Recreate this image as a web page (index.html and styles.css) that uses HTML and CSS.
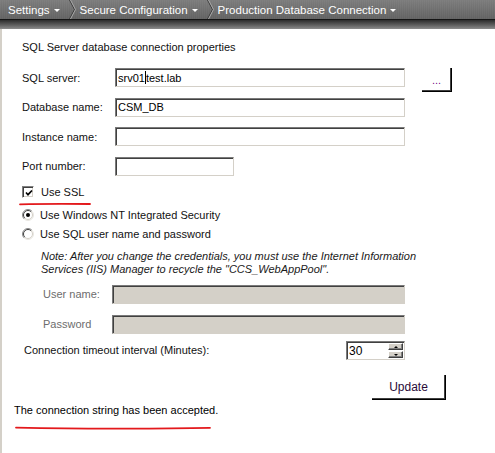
FILE: index.html
```
<!DOCTYPE html>
<html lang="en">
<head>
<meta charset="utf-8">
<title>Production Database Connection</title>
<link rel="stylesheet" href="styles.css">
</head>
<body>
<header class="topbar">
  <nav class="crumbs">
    <span class="crumb">Settings<i class="caret-down"></i></span>
    <svg class="sep" viewBox="0 0 7 19" aria-hidden="true"><polyline points="0.5,0 5.5,9.5 0.5,19" fill="none" stroke="#3a3a3a" stroke-width="1"/><polyline points="1.5,0 6.5,9.5 1.5,19" fill="none" stroke="#a8a8a8" stroke-width="1"/></svg>
    <span class="crumb">Secure Configuration<i class="caret-down"></i></span>
    <svg class="sep" viewBox="0 0 7 19" aria-hidden="true"><polyline points="0.5,0 5.5,9.5 0.5,19" fill="none" stroke="#3a3a3a" stroke-width="1"/><polyline points="1.5,0 6.5,9.5 1.5,19" fill="none" stroke="#a8a8a8" stroke-width="1"/></svg>
    <span class="crumb">Production Database Connection<i class="caret-down"></i></span>
  </nav>
  <div class="band"></div>
</header>

<main class="page">
  <div class="title">SQL Server database connection properties</div>

  <div class="fields">
    <label class="lbl">SQL server:</label>
    <div class="field wide"><span>srv01</span><span class="cursor"></span><span>test.lab</span></div>
    <button class="btn browse" type="button">...</button>

    <label class="lbl">Database name:</label>
    <div class="field wide">CSM_DB</div>

    <label class="lbl">Instance name:</label>
    <div class="field wide"></div>

    <label class="lbl">Port number:</label>
    <div class="field port"></div>
  </div>

  <div class="check-row">
    <span class="checkbox">
      <svg viewBox="0 0 8 8" aria-hidden="true"><polyline points="1,3.5 3,5.7 7,1.5" fill="none" stroke="#000" stroke-width="1.7"/></svg>
    </span>
    <span>Use SSL</span>
  </div>
  <svg class="ink ink-ssl" viewBox="0 0 72 4" aria-hidden="true"><path d="M1 2.3 Q30 1.6 71 2" fill="none" stroke="#e3191c" stroke-width="1.8" stroke-linecap="round"/></svg>

  <div class="radio-row first">
    <svg class="radio" viewBox="0 0 12 12" aria-hidden="true">
      <circle cx="6" cy="6" r="5.5" fill="#fff"/>
      <path d="M9.9 2.1 A5.5 5.5 0 0 0 2.1 9.9" fill="none" stroke="#8a8a8a"/>
      <path d="M9.2 2.8 A4.5 4.5 0 0 0 2.8 9.2" fill="none" stroke="#404040"/>
      <path d="M2.1 9.9 A5.5 5.5 0 0 0 9.9 2.1" fill="none" stroke="#e8e6e1"/>
      <path d="M2.8 9.2 A4.5 4.5 0 0 0 9.2 2.8" fill="none" stroke="#d4d0c8"/>
      <circle cx="6" cy="6" r="2" fill="#000"/>
    </svg>
    <span>Use Windows NT Integrated Security</span>
  </div>
  <div class="radio-row second">
    <svg class="radio" viewBox="0 0 12 12" aria-hidden="true">
      <circle cx="6" cy="6" r="5.5" fill="#fff"/>
      <path d="M9.9 2.1 A5.5 5.5 0 0 0 2.1 9.9" fill="none" stroke="#8a8a8a"/>
      <path d="M9.2 2.8 A4.5 4.5 0 0 0 2.8 9.2" fill="none" stroke="#404040"/>
      <path d="M2.1 9.9 A5.5 5.5 0 0 0 9.9 2.1" fill="none" stroke="#e8e6e1"/>
      <path d="M2.8 9.2 A4.5 4.5 0 0 0 9.2 2.8" fill="none" stroke="#d4d0c8"/>
    </svg>
    <span>Use SQL user name and password</span>
  </div>

  <p class="note">Note: After you change the credentials, you must use the Internet Information<br>Services (IIS) Manager to recycle the "CCS_WebAppPool".</p>

  <div class="creds">
    <label class="lbl dim">User name:</label>
    <div class="field disabled"></div>
    <label class="lbl dim">Password</label>
    <div class="field disabled"></div>
  </div>

  <div class="timeout">
    <label class="lbl">Connection timeout interval (Minutes):</label>
    <div class="spin">
      <span class="spin-val">30</span>
      <span class="spin-btns">
        <span class="sb"><i class="tri up"></i></span>
        <span class="sb"><i class="tri down"></i></span>
      </span>
    </div>
  </div>

  <div class="actions">
    <button class="btn update" type="button">Update</button>
  </div>

  <div class="message">The connection string has been accepted.</div>
  <svg class="ink ink-msg" viewBox="0 0 196 4" aria-hidden="true"><path d="M1 1.6 Q60 2.8 110 2.6 T195 1.8" fill="none" stroke="#e3191c" stroke-width="1.8" stroke-linecap="round"/></svg>
</main>
</body>
</html>
```
FILE: styles.css
```
* { box-sizing: border-box; }
html, body { margin: 0; background: #fff; }
body {
  width: 495px;
  height: 453px;
  overflow: hidden;
  font-family: "Liberation Sans", Arial, sans-serif;
  font-size: 11px;
  color: #111;
}

/* ---------- top breadcrumb bar ---------- */
.crumbs {
  display: flex;
  align-items: center;
  height: 20px;
  padding-left: 8px;
  background:
    repeating-linear-gradient(90deg, rgba(255,255,255,0.035) 0 1px, transparent 1px 2px),
    linear-gradient(#7c7c7c, #626262);
  border-bottom: 1px solid #151515;
  color: #fff;
  font-size: 11.5px;
}
.crumb { display: flex; align-items: center; white-space: nowrap; }
.caret-down {
  width: 0; height: 0;
  border-left: 3px solid transparent;
  border-right: 3px solid transparent;
  border-top: 3px solid #fff;
  margin-left: 4px;
  margin-top: 1px;
}
.sep { width: 7px; height: 19px; margin: 0 4px 0 9px; flex: none; }
.band {
  height: 9px;
  background: linear-gradient(#2c2c2c, #5e5e5e 55%, #8c8c8c);
}

/* ---------- page ---------- */
.page {
  border-left: 2px solid #d4d0c8;
  padding: 11px 0 0 20px;
  height: 424px;
}
.title { height: 14px; line-height: 14px; }

.lbl { white-space: nowrap; }
.dim { color: #6d6d6d; }

.field {
  height: 19px;
  border: 1px solid;
  border-color: #7a7a7a #d4d0c8 #d4d0c8 #7a7a7a;
  box-shadow: inset 1px 1px 0 #404040;
  background: #fff;
  padding: 0 0 0 2px;
  display: flex;
  align-items: center;
  color: #000;
  white-space: nowrap;
}
.cursor { width: 1px; height: 13px; background: #000; }
.field.disabled { background: #d4d0c8; }

.fields {
  display: grid;
  grid-template-columns: 93px 290px 47px;
  grid-auto-rows: 19px;
  row-gap: 10.67px;
  align-items: center;
  margin-top: 14px;
}
.fields .lbl { grid-column: 1; }
.fields .field { grid-column: 2; }
.field.port { width: 119px; }

.btn {
  font-family: "Liberation Sans", Arial, sans-serif;
  font-size: 11px;
  background: #fff;
  border: 0;
  border-right: 1px solid #000;
  border-bottom: 1px solid #000;
  box-shadow: inset -1px -1px 0 #404040;
  padding: 0;
  margin: 0;
}
.browse {
  grid-column: 3;
  grid-row: 1;
  align-self: start;
  justify-self: end;
  width: 30px;
  height: 24px;
  color: #7a0a8a;
}

/* checkbox & radios */
.check-row, .radio-row {
  display: flex;
  align-items: center;
  height: 13px;
}
.check-row { gap: 7px; margin-top: 10px; }
.checkbox {
  width: 12px; height: 12px;
  border: 1px solid;
  border-color: #808080 #fff #fff #808080;
  box-shadow: inset 1px 1px 0 #404040, inset -1px -1px 0 #d4d0c8;
  background: #fff;
  display: flex;
  align-items: center;
  justify-content: center;
  padding-left: 1px;
  padding-top: 1px;
}
.checkbox svg { width: 8px; height: 8px; display: block; }

.ink { display: block; }
.ink-ssl { width: 72px; height: 4px; margin: 3px 0 0 -3px; }

.radio-row { gap: 6px; }
.radio-row.first { margin-top: 3px; }
.radio-row.second { margin-top: 6px; }
.radio { width: 12px; height: 12px; flex: none; }

.note {
  margin: 9px 0 0;
  padding-left: 19px;
  line-height: 13px;
  font-style: italic;
  color: #1a1a1a;
  white-space: nowrap;
}

.creds {
  display: grid;
  grid-template-columns: 69px 293px;
  grid-auto-rows: 19px;
  row-gap: 11px;
  align-items: center;
  margin-top: 9px;
  padding-left: 21px;
}

.timeout {
  display: grid;
  grid-template-columns: 322px 59px;
  align-items: center;
  height: 19px;
  margin-top: 7px;
  padding-left: 2px;
}
.spin {
  height: 19px;
  border: 1px solid;
  border-color: #7a7a7a #d4d0c8 #d4d0c8 #7a7a7a;
  box-shadow: inset 1px 1px 0 #404040;
  background: #fff;
  display: flex;
  align-items: center;
  justify-content: space-between;
  padding: 1px 1px 0 2px;
  color: #000;
  font-size: 12px;
}
.spin-btns { display: flex; flex-direction: column; gap: 1px; }
.sb {
  width: 15px; height: 7px;
  background: #d4d0c8;
  border: 1px solid;
  border-color: #fff #404040 #404040 #fff;
  box-shadow: inset -1px -1px 0 #808080;
  display: flex;
  align-items: center;
  justify-content: center;
}
.tri { width: 0; height: 0; border-left: 2px solid transparent; border-right: 2px solid transparent; }
.tri.up { border-bottom: 2px solid #000; }
.tri.down { border-top: 2px solid #000; }

.actions { padding-left: 350px; margin-top: 15px; }
.update { width: 74px; height: 25px; color: #2a0c3a; font-size: 12px; }

.message { margin: 4px 0 0 -8px; line-height: 13px; color: #000; }
.ink-msg { width: 196px; height: 4px; margin: 9px 0 0 -7px; }
```
